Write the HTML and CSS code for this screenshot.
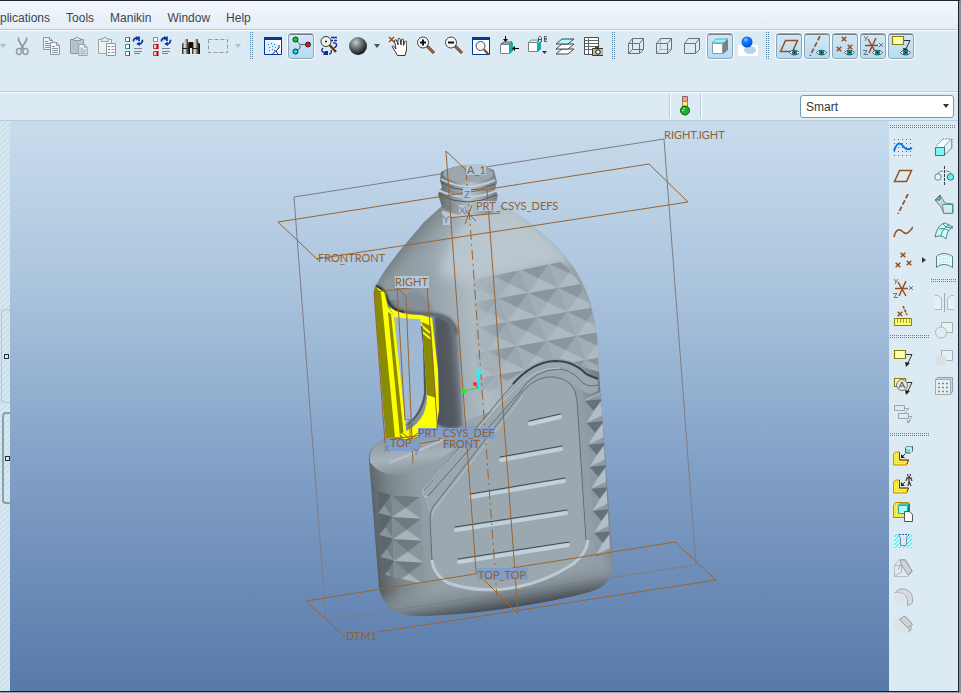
FILE: index.html
```html
<!DOCTYPE html>
<html lang="en">
<head>
<meta charset="utf-8">
<title>Part modeler</title>
<link rel="stylesheet" href="styles.css">
</head>
<body>
<svg class="defs" aria-hidden="true">
  <defs>
    <radialGradient id="gBall" cx=".38" cy=".3" r=".7"><stop offset="0" stop-color="#c4cbd0"/><stop offset=".45" stop-color="#6c767c"/><stop offset="1" stop-color="#14181b"/></radialGradient>
    <radialGradient id="gBlue" cx=".4" cy=".3" r=".7"><stop offset="0" stop-color="#a8dcff"/><stop offset=".3" stop-color="#1a7dff"/><stop offset="1" stop-color="#0050e0"/></radialGradient>
    <linearGradient id="gBino"><stop offset="0" stop-color="#1c1c1a"/><stop offset=".35" stop-color="#f0ead8"/><stop offset=".7" stop-color="#4a463e"/><stop offset="1" stop-color="#000"/></linearGradient>
    <pattern id="pTeal" width="2" height="2" patternUnits="userSpaceOnUse"><rect width="2" height="2" fill="#0b9c9c"/><path d="M0 0h1v1H0zM1 1h1v1H1z" fill="#8a8f90"/></pattern>
    <pattern id="pGold" width="2" height="2" patternUnits="userSpaceOnUse"><rect width="2" height="2" fill="#fff04a"/><path d="M0 0h1v1H0z" fill="#f4c820"/></pattern>
    <pattern id="pHatch" width="4" height="4" patternUnits="userSpaceOnUse"><rect width="4" height="4" fill="#e6ffff"/><path d="M-1 5L5 -1M-1 1L1 -1M3 5L5 3" stroke="#5ae6ee" stroke-width="1.4"/></pattern>
  </defs>
  <symbol id="cut" viewBox="0 0 20 20"><path d="M6.500 1.500V4L11.500 13M14.500 1.500V4L9 13" stroke="#8b9499" stroke-width="1.600" fill="none"/><ellipse cx="7" cy="15.500" rx="2.500" ry="3" stroke="#939ca1" stroke-width="1.500" fill="none"/><ellipse cx="13.500" cy="15.500" rx="2.500" ry="3" stroke="#939ca1" stroke-width="1.500" fill="none"/></symbol>
  <symbol id="sheet" viewBox="0 0 10 13"><path d="M.5 .5h6l3 3v9h-9z" fill="#eef4f7" stroke="#8d979c"/><path d="M6.500 .5v3h3M2 4.500h3M2 6.500h6M2 8.500h6M2 10.500h6" stroke="#8d979c" fill="none"/></symbol>
  <symbol id="copy" viewBox="0 0 20 20"><use href="#sheet" x="3" y="1" width="10" height="13"/><use href="#sheet" x="10" y="6" width="10" height="13"/></symbol>
  <symbol id="paste" viewBox="0 0 20 20"><path d="M2.500 3.500h13v14h-13z" fill="#bcc6cb" stroke="#8d979c"/><path d="M5.500 4.500v-2h2l1-1.500h1l1 1.500h2v2z" fill="#dfe7eb" stroke="#8d979c"/><path d="M4 6l10 10M4 10l6 6M8 6l6 6" stroke="#a5b0b5" fill="none"/><use href="#sheet" x="10" y="8" width="10" height="12"/></symbol>
  <symbol id="pasteSpecial" viewBox="0 0 20 20"><path d="M2.500 3.500h13v14h-13z" fill="#eaf1f5" stroke="#9aa4a9"/><path d="M5.500 5.500v-3h2l1-1.500h1l1 1.500h2v3z" fill="#dfe7eb" stroke="#9aa4a9"/><path d="M10.500 7.500h9v12h-9z" fill="#f4f8fa" stroke="#8d979c"/><path d="M12 10h2v1h-2zM12 13h2v1h-2zM12 16h2v1h-2z" fill="#747e84"/><path d="M15.500 10.500h3M15.500 13.500h3M15.500 16.500h3" stroke="#8d979c"/></symbol>
  <symbol id="spin" viewBox="0 0 12 11"><path d="M1 6C1 3 3 2 5 2M7 .5v5M11 4C11 7 9 9 6.500 9" stroke="#0a37a8" stroke-width="2" fill="none"/><path d="M4 0L8 2.500L4 5zM8 6L4 8.800L8 11z" fill="#0a37a8"/></symbol>
  <symbol id="regen" viewBox="0 0 20 20"><path d="M1.500 1.500h4v4h-4zM1.500 8.500h4v4h-4zM1.500 15.500h4v4h-4z" fill="#fff" stroke="#27999a"/><path d="M5.500 1v5M5.500 8v5M5.500 15v5" stroke="#404c50"/><use href="#spin" x="8" y="0" width="12" height="10"/><path d="M10 12.500h8M10 15.500h8M10 17.500h6" stroke="#7b8489"/></symbol>
  <symbol id="regenRed" viewBox="0 0 20 20"><path d="M1.500 1.500h4v4h-4z" fill="#fff" stroke="#808a8f"/><path d="M1.500 8.500h4v4h-4zM1.500 15.500h4v4h-4z" fill="#ffc4c4" stroke="#c33"/><path d="M5.500 8v5M5.500 15v5" stroke="#c00000" stroke-width="2"/><use href="#spin" x="8" y="0" width="12" height="10"/><path d="M10 12.500h8M10 15.500h8M10 17.500h6" stroke="#7b8489"/></symbol>
  <symbol id="find" viewBox="0 0 20 20"><path d="M4 3h4v3l2 2v10H2V8l2-2z" fill="url(#gBino)"/><path d="M14 3h4v3l2 2v10h-8V8l2-2z" fill="url(#gBino)"/><path d="M9 6h4v6H9z" fill="#111"/><path d="M2 12.500h8M12 12.500h8" stroke="#222"/></symbol>
  <symbol id="pickBox" viewBox="0 0 20 20"><rect x=".5" y="3.500" width="19" height="13" fill="none" stroke="#929ca1" stroke-dasharray="4 2"/></symbol>
  <symbol id="repaint" viewBox="0 0 20 20"><path d="M1.500 1.500h17v17h-17z" fill="#fff" stroke="#003a9e"/><path d="M2 5C8 4 13 6 17 12L9 18H2z" fill="#dff1fb"/><path d="M1 1h18v3H1z" fill="#0038a0"/><path d="M5 8.500h1M8 7.500h1M11 8.500h1M6 11.500h1M9 10.500h1M12 11.500h1M9 13.500h1M6 14.500h1M11 14.500h1" stroke="#1877d8"/><path d="M16 9v3l-7 6.500M13 15l2 3" stroke="#202060" fill="none"/></symbol>
  <symbol id="spinCenter" viewBox="0 0 20 20"><path d="M5 4l4 4.500h8M9 8.500V12l-4 3.500" stroke="#596066" fill="none"/><g stroke="#222"><circle cx="4.500" cy="3.500" r="2.500" fill="#18cf1c"/><circle cx="17" cy="8.500" r="2.500" fill="#f01010"/><circle cx="4.500" cy="15.500" r="2.500" fill="#18d8e0"/></g></symbol>
  <symbol id="orientMode" viewBox="0 0 20 20"><path d="M12 1.500h6M12 4.500h2M15 4.500h3M14 7c4-1 5 3 1 5M4 12c-3 3 0 5 3 4M10 18c2 0 3-2 2-4" stroke="#13279f" fill="none" stroke-width="1.300"/><path d="M4 19l2-4h3v4z" fill="#13279f"/><path d="M10.500 9L17 16" stroke="#6b2f12" stroke-width="2.500"/><circle cx="7" cy="5.500" r="5" fill="#eef6fa" stroke="#333"/><circle cx="7" cy="5.500" r="1" fill="#111"/></symbol>
  <symbol id="ball" viewBox="0 0 20 20"><circle cx="11" cy="10" r="9" fill="url(#gBall)"/></symbol>
  <symbol id="hand" viewBox="0 0 20 20"><path d="M2 1l5 5M7 1L2 6" stroke="#a0491a" stroke-width="1.500"/><path d="M5 10.500c1-1 2 0 4 2.500L7.500 5c0-1.600 2-1.600 2.300 0L11 9V3.500c0-1.600 2-1.600 2.200 0L14 9l.5-5c.2-1.400 2-1.400 2 .2V9.500l1.300-3.700c.5-1.300 2.200-1 2 .5L19.500 14 18 19.500h-7.500L8.500 16z" fill="#fff" stroke="#333"/></symbol>
  <symbol id="lens" viewBox="0 0 20 20"><path d="M12 10l7 7" stroke="#3f3330" stroke-width="3"/><path d="M12.500 10.500l6.500 6.500" stroke="#b86a38" stroke-width="1.500"/><circle cx="8" cy="6.500" r="5.500" fill="#f2f8fb" stroke="#444"/></symbol>
  <symbol id="zoomIn" viewBox="0 0 20 20"><use href="#lens"/><path d="M5 6.500h6M8 3.500v6" stroke="#111" stroke-width="2"/></symbol>
  <symbol id="zoomOut" viewBox="0 0 20 20"><use href="#lens"/><path d="M5 6.500h6" stroke="#111" stroke-width="2"/></symbol>
  <symbol id="refit" viewBox="0 0 20 20"><path d="M1.500 1.500h17v17h-17z" fill="#fff" stroke="#0038a0"/><path d="M1 1h18v3H1z" fill="#0038a0"/><circle cx="9.500" cy="10" r="4.500" fill="#eef6fa" stroke="#444"/><path d="M13 13.500l4.500 5" stroke="#81421d" stroke-width="2"/></symbol>
  <symbol id="reorient" viewBox="0 0 20 20"><path d="M2 8l3-2h8l-3 2z" fill="#a5ffff" stroke="#555"/><path d="M1.500 8.500h9v9h-9z" fill="#fff" stroke="#788286"/><path d="M11 8l3-2v9l-3 3z" fill="url(#pTeal)"/><path d="M6.500 0v5M20 12.500h-5" stroke="#000"/><path d="M4 3h5L6.500 6zM16 10v5l-3-2.500z" fill="#000"/></symbol>
  <symbol id="views" viewBox="0 0 20 20"><path d="M1 7l3-3h8l-2 3z" fill="#a5ffff" stroke="#555" stroke-width=".6"/><path d="M1.500 6.500h9v9h-9z" fill="#fff" stroke="#788286"/><path d="M11 7l3-2v8l-3 3z" fill="url(#pTeal)"/><path d="M11.500 6V1.500l1-1h1l1 1V6M11.500 3.500h3M17.500 .5h2l1 1-1 1.500h-2zM17.500 3h2l1 1-1 1.500h-2z" stroke="#555" fill="none"/><path d="M15 15h5l-2.500 3z" fill="#333"/></symbol>
  <symbol id="layers" viewBox="0 0 20 20"><g stroke="#444"><path d="M1 18l6-5h12l-6 5z" fill="#fff"/><path d="M1 13l6-5h12l-6 5z" fill="#fff"/><path d="M1 8l6-5h12l-6 5z" fill="#a8ffff"/></g></symbol>
  <symbol id="viewMgr" viewBox="0 0 20 20"><path d="M1.500 1.500h14v17h-14z" fill="#fff" stroke="#454d51"/><path d="M1.500 4.500h14M1.500 7.500h14M1.500 10.500h14M1.500 13.500h14M5.500 1v17" stroke="#5e676b"/><path d="M9.500 12.500h11v7h-11z" fill="#bab5a4" stroke="#383830"/><path d="M12 10h4v2h-4z" fill="#484840"/><circle cx="15" cy="16" r="2.200" fill="#fff" stroke="#111"/></symbol>
  <symbol id="wire" viewBox="0 0 20 20"><g stroke="#697176" fill="none"><path d="M2.500 7.500h11v10h-11zM6.500 2.500h11v11h-11zM2.500 7.500l4-5M13.500 7.500l4-5M2.500 17.500l4-4M13.500 17.500l4-4"/></g></symbol>
  <symbol id="hidden" viewBox="0 0 20 20"><g stroke="#697176" fill="none"><path d="M6.500 2.500v11h11M2.500 17.500l4-4" stroke="#a9b4b9"/><path d="M2.500 7.500h11v10h-11zM2.500 7.500l4-5h11v11l-4 4M13.500 7.500l4-5"/></g></symbol>
  <symbol id="noHidden" viewBox="0 0 20 20"><path d="M2.500 7.500h11v10h-11zM2.500 7.500l4-5h11v11l-4 4M13.500 7.500l4-5" stroke="#697176" fill="none"/></symbol>
  <symbol id="shaded" viewBox="0 0 20 20"><path d="M2 7l4-4h12l-4 4z" fill="#7effff" stroke="#6f7f85" stroke-width=".7"/><path d="M2.500 7.500h10v10h-10z" fill="#fff" stroke="#8d9da3"/><path d="M13 7l5-4v11l-5 4z" fill="url(#pTeal)"/></symbol>
  <symbol id="enhanced" viewBox="0 0 20 20"><path d="M0 9h20v11H0z" fill="#fff"/><ellipse cx="12" cy="14" rx="6" ry="4" fill="#b5d4ec"/><circle cx="9" cy="6" r="5.500" fill="url(#gBlue)"/></symbol>
  <symbol id="eye" viewBox="0 0 11 7"><path d="M.5 3.500C3 .5 7.500 .5 10.500 3.500C8 6.700 3 6.700 .5 3.500z" fill="#fff" stroke="#444"/><circle cx="5.500" cy="3.500" r="2.500" fill="#087c7c"/><path d="M5 3h1v1H5z"/></symbol>
  <symbol id="plane" viewBox="0 0 20 20"><path d="M1.500 15.500l5-11h12l-5 11z" fill="none" stroke="#94501f" stroke-width="1.500"/></symbol>
  <symbol id="axis" viewBox="0 0 20 20"><path d="M15 0L5 20" stroke="#94501f" stroke-width="1.700" stroke-dasharray="5 2"/></symbol>
  <symbol id="x" viewBox="0 0 6 6"><path d="M.7 .7l4.600 4.600M5.300 .7L.7 5.300" stroke="#94501f" stroke-width="1.500"/></symbol>
  <symbol id="points" viewBox="0 0 20 20"><use href="#x" x="7" y="2" width="6" height="6"/><use href="#x" x="2" y="12" width="6" height="6"/><use href="#x" x="13" y="10" width="6" height="6"/></symbol>
  <symbol id="csys" viewBox="0 0 20 20"><path d="M2 10.500h13M5 4l8 14M13 3L6 18" stroke="#94501f" stroke-width="1.500"/><path d="M1 1l2 3 2-3M3 4l-1 2M16 8l4 4M20 8l-4 4M0 15.500h4L1 19.500h4" stroke="#6d767b" fill="none"/></symbol>
  <symbol id="note" viewBox="0 0 20 20"><path d="M1.500 2.500h11v8h-11z" fill="#ffffa8" stroke="#84810a" stroke-width="1.200"/><path d="M13 6.500h6L14 17" stroke="#333" fill="none"/><path d="M12 14l1 5 4-4z" fill="#222"/></symbol>
  <symbol id="planeEye" viewBox="0 0 20 20"><use href="#plane"/><use href="#eye" x="10" y="13" width="11" height="7"/></symbol>
  <symbol id="axisEye" viewBox="0 0 20 20"><use href="#axis" x="-2"/><use href="#eye" x="9" y="13" width="11" height="7"/></symbol>
  <symbol id="pointsEye" viewBox="0 0 20 20"><use href="#points" x="-1" y="-2"/><use href="#eye" x="9" y="13" width="11" height="7"/></symbol>
  <symbol id="csysEye" viewBox="0 0 20 20"><use href="#csys" y="-1"/><use href="#eye" x="9" y="13" width="11" height="7"/></symbol>
  <symbol id="noteEye" viewBox="0 0 20 20"><use href="#note" y="-2"/><use href="#eye" x="9" y="13" width="11" height="7"/></symbol>
  <symbol id="sketch" viewBox="0 0 20 20"><g fill="none" stroke="#3f6f9c" stroke-dasharray="1 3"><path d="M1 1.500h19M1 5.500h19M1 9.500h19M1 13.500h19M1 17.500h19"/></g><path d="M1 13C4 4 7 4 10 8S15 12 19 10" stroke="#0878ea" stroke-width="2" fill="none"/></symbol>
  <symbol id="curve" viewBox="0 0 20 20"><path d="M1 15C3 6 7 7 10 10S16 11 20 5" stroke="#94501f" stroke-width="1.500" fill="none"/></symbol>
  <symbol id="measure" viewBox="0 0 20 20"><use href="#x" x="4" y="5" width="6" height="6"/><path d="M10 0l4 9" stroke="#94501f" stroke-width="1.600" stroke-dasharray="3 1"/><path d="M1.500 12.500h17v7h-17z" fill="#ffff7d" stroke="#84810a"/><path d="M4.500 13v4M7.500 13v4M10.500 13v4M13.500 13v4M16.500 13v4" stroke="#a5a020"/></symbol>
  <symbol id="noteA" viewBox="0 0 20 20"><use href="#note"/><circle cx="9" cy="9" r="5.500" fill="#e4e4da" stroke="#777"/><path d="M6 12l3-6 3 6M7 10h4" stroke="#555" fill="none"/></symbol>
  <symbol id="noteOff" viewBox="0 0 20 20"><path d="M1.500 1.500h10v5h-10zM5.500 9.500h10v5h-10z" stroke="#9ba5aa" fill="#e2e9ed"/><path d="M12 4.500h4L12 9M16 12.500h3L14.500 19v-3M14.500 19l3-2" stroke="#9ba5aa" fill="none"/></symbol>
  <symbol id="gold" viewBox="0 0 20 20"><path d="M.5 8l2-2h4v8h9l-2 5H.5z" fill="url(#pGold)" stroke="#d09000"/><path d="M6.500 6v8h9l-1.500 4" stroke="#6e430b" fill="none"/></symbol>
  <symbol id="addPart" viewBox="0 0 20 20"><use href="#gold"/><path d="M12.500 2l2-2h5v5l-2 2h-5z" fill="#70dede" stroke="#566"/><path d="M13 2h5v5" stroke="#fff" fill="none"/><path d="M12 8l-3 3" stroke="#333"/><path d="M8 8v4h4z" fill="#222"/></symbol>
  <symbol id="addManikin" viewBox="0 0 20 20"><use href="#gold"/><path d="M12 8l-3 3" stroke="#333"/><path d="M8 8v4h4z" fill="#222"/><circle cx="16" cy="1" r="1.500" fill="#fff" stroke="#333"/><path d="M16 3v4M13 7l1-3h4l1 3M15 12l1-5 2 5" stroke="#444" stroke-width="1.300" fill="none"/></symbol>
  <symbol id="include" viewBox="0 0 20 20"><path d="M.5 3.500l2-3h13v12l-3 3H.5z" fill="url(#pGold)" stroke="#c08800"/><path d="M5.500 3.500h9v8h-9z" fill="#9fffff" stroke="#2ca8ac"/><path d="M5 3l2-2h10l-2 2z" fill="#42c7c7"/><path d="M15 3l2-2v10l-2 1z" fill="#078888"/><path d="M11.500 9.500h5l3 3v7h-8z" fill="#fff" stroke="#555"/></symbol>
  <symbol id="hole" viewBox="0 0 20 20"><path d="M1 4h4l3 3v9h5V7l3-3h3v14H1z" fill="url(#pHatch)"/><path d="M5 4.500l2.500 3v8h6v-8l3-3" stroke="#77909b" fill="none"/><path d="M6 4.500h10" stroke="#345ac4" stroke-dasharray="2 1"/></symbol>
  <symbol id="shell" viewBox="0 0 20 20"><path d="M1.500 7.500l5-6h6l7 12-5 5h-13z" stroke="#b5bfc4" fill="#e2e9ed"/><path d="M7 2h5l7 11-4 4L8 6z" fill="#ccd4d8" stroke="#949ea3"/><path d="M1.500 7.500h7v6l-7 5M8 6L5 12" stroke="#a9b3b8" fill="none"/></symbol>
  <symbol id="round" viewBox="0 0 20 20"><path d="M1.500 7l5-4h5c5 1 8 5 8 10v4l-5 3v-4c0-5-3-9-8-9z" fill="#d4dadd" stroke="#a0aaaf"/><path d="M1 7h5c5 0 8 4 8 9v3l-6-1-7-3z" fill="#dee3e5"/></symbol>
  <symbol id="chamfer" viewBox="0 0 20 20"><path d="M1 7l5-4 8 9v7l-6-1-7-4z" fill="#dee3e5"/><path d="M6.500 5.500l4-3h2l7 8-5 3z" fill="#cdd4d7" stroke="#8f999e"/><path d="M15 14l4-3v5l-4 3z" fill="#b9c2c7"/></symbol>
  <symbol id="extrude" viewBox="0 0 20 20"><path d="M2 8l7-7h9v9l-7 7" fill="#eefdff" stroke="#72868d" stroke-dasharray="2 1"/><path d="M17.500 1v9l-7 7V8z" fill="#d8f6f8" stroke="#8aa0a5"/><path d="M1.500 9.500h9v8h-9z" fill="#80f4f4" stroke="#4b7378"/></symbol>
  <symbol id="revolve" viewBox="0 0 20 20"><path d="M10.500 0v20" stroke="#343e43" stroke-dasharray="3 1"/><circle cx="4" cy="11" r="3.200" fill="#e5f5f7" stroke="#6d858b"/><circle cx="16.500" cy="11" r="3.200" fill="#6befef" stroke="#477177"/><path d="M4 8c0-2 3-3 5-3M12 5c3 0 5 1 5 3" stroke="#6d858b" fill="none"/></symbol>
  <symbol id="sweep" viewBox="0 0 20 20"><path d="M1 6l5-5 5 8 8 1v9h-9L7 13z" fill="#d0d3d5" stroke="#748086"/><path d="M1 6l5-5v5z" fill="#33dada" stroke="#427177"/><path d="M9 10l10 1v8z" fill="#8df3f3"/><path d="M8.500 10.500h10v9h-9z" fill="#e8fbfc" fill-opacity=".5" stroke="#5c9297"/></symbol>
  <symbol id="blend" viewBox="0 0 20 20"><path d="M1 15C3 6 6 2 11 1l8 4c-4 2-6 5-7 12-3-3-7-4-11-2z" fill="#cffafa" stroke="#4e8084"/><path d="M5 7c4-1 8 0 10 2M9 2l3 3 7 1M7 14c1-5 3-8 8-11" stroke="#368e93" fill="none"/></symbol>
  <symbol id="style" viewBox="0 0 20 20"><path d="M2.500 17.500v-11c4-4 11-4 16 0v11c-5-4-12-4-16 0z" fill="#e2fbfb" stroke="#587d82"/><path d="M5 7c4-2 8-2 11 0M5 10c4-2 8-2 11 0M5 13c4-2 8-2 11 0" stroke="#91d4d8" stroke-dasharray="1 1" fill="none"/></symbol>
  <symbol id="mirror" viewBox="0 0 20 20"><path d="M1 17.500h6.500v-11L4 3.500H1M20 17.500h-6.500v-11L17 3.500h3" fill="#e9f0f4" stroke="#aeb9be"/><path d="M10.500 1v19" stroke="#9ea9ae"/></symbol>
  <symbol id="merge" viewBox="0 0 20 20"><path d="M7.500 2.500h11v10h-11z" fill="#eaf1f5" stroke="#a6b1b6"/><circle cx="7" cy="12.500" r="5.500" fill="#e3ebef" stroke="#acb6bb"/></symbol>
  <symbol id="trim" viewBox="0 0 20 20"><path d="M7.500 2.500h11v10h-11z" fill="#eaf1f5" stroke="#a6b1b6"/><circle cx="7" cy="12.500" r="5.500" fill="#d9dfe2"/></symbol>
  <symbol id="patternTool" viewBox="0 0 20 20"><path d="M1.500 3.500l2-2h15v14l-2 3h-15z" fill="#cdd5d9" stroke="#949ea3"/><path d="M1.500 3.500h15v15h-15z" fill="#e8eef1" stroke="#a0aaaf"/><path d="M4 7.500h11M4 11.500h11M4 15.500h11" stroke="#7d878c" stroke-dasharray="2 2" stroke-width="1.500"/></symbol>
</svg>

<div class="window">
  <nav class="menu" aria-label="Main menu">
    <a href="#">plications</a><a href="#">Tools</a><a href="#">Manikin</a><a href="#">Window</a><a href="#">Help</a>
  </nav>
  <div class="toolbar">
    <button class="drop edge" aria-label="Undo list"></button>
    <button class="tool" aria-label="Cut"><svg><use href="#cut"/></svg></button>
    <button class="tool" aria-label="Copy"><svg><use href="#copy"/></svg></button>
    <button class="tool" aria-label="Paste"><svg><use href="#paste"/></svg></button>
    <button class="tool" aria-label="Paste special"><svg><use href="#pasteSpecial"/></svg></button>
    <button class="tool" aria-label="Regenerate"><svg><use href="#regen"/></svg></button>
    <button class="tool" aria-label="Regenerate manager"><svg><use href="#regenRed"/></svg></button>
    <button class="tool" aria-label="Find"><svg><use href="#find"/></svg></button>
    <button class="tool" aria-label="Select inside box"><svg><use href="#pickBox"/></svg></button>
    <button class="drop" aria-label="Selection modes"></button>
    <span class="grip"></span>
    <button class="tool" aria-label="Repaint"><svg><use href="#repaint"/></svg></button>
    <button class="tool on" aria-label="Spin center"><svg><use href="#spinCenter"/></svg></button>
    <button class="tool" aria-label="Orient mode"><svg><use href="#orientMode"/></svg></button>
    <button class="tool" aria-label="Appearance"><svg><use href="#ball"/></svg></button>
    <button class="drop dark" aria-label="Appearance list"></button>
    <button class="tool" aria-label="Pan"><svg><use href="#hand"/></svg></button>
    <button class="tool" aria-label="Zoom in"><svg><use href="#zoomIn"/></svg></button>
    <button class="tool" aria-label="Zoom out"><svg><use href="#zoomOut"/></svg></button>
    <button class="tool" aria-label="Refit"><svg><use href="#refit"/></svg></button>
    <button class="tool" aria-label="Reorient"><svg><use href="#reorient"/></svg></button>
    <button class="tool" aria-label="Saved views"><svg><use href="#views"/></svg></button>
    <button class="tool" aria-label="Layers"><svg><use href="#layers"/></svg></button>
    <button class="tool" aria-label="View manager"><svg><use href="#viewMgr"/></svg></button>
    <span class="grip mid"></span>
    <button class="tool" aria-label="Wireframe"><svg><use href="#wire"/></svg></button>
    <button class="tool" aria-label="Hidden line"><svg><use href="#hidden"/></svg></button>
    <button class="tool" aria-label="No hidden"><svg><use href="#noHidden"/></svg></button>
    <button class="tool on" aria-label="Shading"><svg><use href="#shaded"/></svg></button>
    <button class="tool" aria-label="Enhanced realism"><svg><use href="#enhanced"/></svg></button>
    <span class="grip last"></span>
    <button class="tool on" aria-label="Show planes"><svg><use href="#planeEye"/></svg></button>
    <button class="tool on" aria-label="Show axes"><svg><use href="#axisEye"/></svg></button>
    <button class="tool on" aria-label="Show points"><svg><use href="#pointsEye"/></svg></button>
    <button class="tool on" aria-label="Show coordinate systems"><svg><use href="#csysEye"/></svg></button>
    <button class="tool on" aria-label="Show annotations"><svg><use href="#noteEye"/></svg></button>
  </div>
  <div class="status">
    <div class="light" role="img" aria-label="Regeneration status">
      <svg viewBox="0 0 12 20"><path d="M3.500 .5h5v5h-5z" fill="#f29a9a" stroke="#8c6464"/><path d="M3.500 5.500h5v5h-5z" fill="#fff36a" stroke="#8f8a50"/><circle cx="6" cy="14.500" r="4.500" fill="#1bb52a" stroke="#0e5316"/><path d="M4 12.500h2M3 14.500h2" stroke="#a0f5a2"/></svg>
    </div>
    <div class="filter"><select aria-label="Selection filter"><option>Smart</option></select></div>
  </div>

  <div class="work">
    <div class="rail"><button class="sash" aria-label="Expand tree"></button><button class="sash strong" aria-label="Expand browser"></button></div>
    <main class="canvas">
      <svg viewBox="10 121 879 570" preserveAspectRatio="xMidYMid meet" role="img" aria-label="Bottle model">
        <defs>
          <linearGradient id="body" gradientUnits="userSpaceOnUse" x1="372" y1="300" x2="610" y2="270"><stop offset="0" stop-color="#626c73"/><stop offset=".14" stop-color="#87929a"/><stop offset=".3" stop-color="#9daab2"/><stop offset=".42" stop-color="#b0bcc4"/><stop offset=".55" stop-color="#a3afb7"/><stop offset=".9" stop-color="#95a1a9"/><stop offset="1" stop-color="#7b8790"/></linearGradient>
          <linearGradient id="shoulder" gradientUnits="userSpaceOnUse" x1="400" y1="228" x2="440" y2="262"><stop offset="0" stop-color="#5b656c"/><stop offset=".5" stop-color="#8d989f"/><stop offset="1" stop-color="#a4b0b8" stop-opacity="0"/></linearGradient>
          <linearGradient id="lower" gradientUnits="userSpaceOnUse" x1="369" y1="530" x2="613" y2="500"><stop offset="0" stop-color="#4f585d"/><stop offset=".1" stop-color="#7a858b"/><stop offset=".22" stop-color="#919ca4"/><stop offset=".5" stop-color="#9aa6ae"/><stop offset=".92" stop-color="#929ea6"/><stop offset="1" stop-color="#727e86"/></linearGradient>
          <linearGradient id="foot" gradientUnits="userSpaceOnUse" x1="490" y1="575" x2="496" y2="612"><stop offset="0" stop-color="#98a4ac" stop-opacity="0"/><stop offset=".55" stop-color="#7e8990"/><stop offset="1" stop-color="#3e464c"/></linearGradient>
          <linearGradient id="neck" gradientUnits="userSpaceOnUse" x1="438" y1="0" x2="498" y2="0"><stop offset="0" stop-color="#5b656b"/><stop offset=".3" stop-color="#8f9aa1"/><stop offset=".55" stop-color="#b4c0c8"/><stop offset=".8" stop-color="#8d989f"/><stop offset="1" stop-color="#737e85"/></linearGradient>
          <linearGradient id="recess" gradientUnits="userSpaceOnUse" x1="432" y1="360" x2="466" y2="357"><stop offset="0" stop-color="#4c525a"/><stop offset=".55" stop-color="#555b63"/><stop offset="1" stop-color="#9aa6ae"/></linearGradient>
          <linearGradient id="ledge" gradientUnits="userSpaceOnUse" x1="400" y1="436" x2="406" y2="485"><stop offset="0" stop-color="#8c979e"/><stop offset=".45" stop-color="#a7b3bb"/><stop offset=".7" stop-color="#8f9aa1"/><stop offset="1" stop-color="#899399" stop-opacity="0"/></linearGradient>
          <linearGradient id="fade" gradientUnits="userSpaceOnUse" x1="476" y1="0" x2="515" y2="0"><stop offset="0" stop-color="#fff" stop-opacity=".25"/><stop offset="1" stop-color="#fff"/></linearGradient>
          <mask id="facetFade" maskUnits="userSpaceOnUse" x="460" y="250" width="150" height="160"><path fill="url(#fade)" d="M460 250h150v160H460z"/></mask>
          <filter id="soft" x="-20%" y="-20%" width="140%" height="140%"><feGaussianBlur stdDeviation="6"/></filter>
          <filter id="softEdge" x="-20%" y="-20%" width="140%" height="140%"><feGaussianBlur stdDeviation="1.500"/></filter>
          <clipPath id="topClip"><path d="M443 205L424 222C402 248 386 266 377 284L380 310H599C598 300 590 292 574 268C557 242 528 222 513 211L496 203z"/></clipPath>
          <pattern id="facet" width="30" height="24" patternUnits="userSpaceOnUse" patternTransform="matrix(1 -.17 .38 1 528 293)"><rect width="30" height="24" fill="#a8b4bc"/><path d="M0 0H30L15 12z" fill="#8a969e"/><path d="M30 0V24L15 12z" fill="#9ba7af"/><path d="M0 24H30L15 12z" fill="#aebac2"/><path d="M0 0L15 12 0 24z" fill="#a2aeb6"/></pattern>
          <pattern id="facetLeft" width="29" height="22" patternUnits="userSpaceOnUse" patternTransform="matrix(1 .06 .05 1 391 495)"><path d="M0 0H29V22H0z" fill="#818c93"/><path d="M0 0H29L14 12z" fill="#6f7a81"/><path d="M29 0V22L14 12z" fill="#8a959c"/><path d="M0 22H29L14 12z" fill="#a8b4bb"/></pattern>
          <pattern id="facetThin" width="14" height="22" patternUnits="userSpaceOnUse" patternTransform="matrix(1 .25 .05 1 377 491)"><path d="M0 0H14V22H0z" fill="#5c666c"/><path d="M0 22H14L7 12z" fill="#8a959c"/><path d="M14 0V22L7 12z" fill="#737e85"/></pattern>
          <pattern id="facetRight" width="26" height="22" patternUnits="userSpaceOnUse" patternTransform="matrix(1 -.1 .07 1 583 401)"><path d="M0 0H26V22H0z" fill="#8e9aa2"/><path d="M2 0L20 0 10 11z" fill="#65717a"/><path d="M2 22L10 11 18 2V16z" fill="#b2bfc8"/></pattern>
        </defs>

        <path class="frame" d="M664 139L294 197L326 620"/>

        <path fill="url(#body)" fill-rule="evenodd" d="M443 205L424 222C402 248 386 266 377 284L374 290L386 438L420 520H606L599 370C598 320 590 292 574 268C557 242 528 222 513 211L496 203zM394 315L421 318L425 392C424 412 412 421 404 430z"/>
        <g clip-path="url(#topClip)">
          <path fill="#b9c6ce" filter="url(#soft)" d="M468 208L515 206C545 232 560 246 574 262L470 282L440 276C444 250 455 232 468 218z"/>
          <path fill="url(#shoulder)" d="M443 205L424 222C402 248 386 266 377 284L380 300L446 300L480 205z"/>
        </g>
        <path fill="url(#facet)" mask="url(#facetFade)" d="M473 280L560 262C580 275 597 310 598 350V375Q583 368 576 363Q545 350 520 373L478 398z"/>
        <path fill="url(#lower)" d="M386 438C374 444 369 449 369 460L379 588C382 604 396 616 418 616C470 616 550 603 590 592C606 587 613 577 613 562L599 372L555 358L515 385L495 410L440 430z"/>
        <path fill="url(#foot)" d="M377 560C410 592 550 594 612 545V568C612 579 606 587 590 592C550 603 470 616 418 616C396 616 382 604 379 588z"/>
        <path fill="url(#ledge)" d="M386 438C374 444 369 449 370 462C385 485 426 474 456 447L495 425L440 428z"/>
        <path fill="none" stroke="#b5c1c9" stroke-width="2" d="M389 463Q414 453 447 438"/>
        <path fill="url(#recess)" filter="url(#softEdge)" d="M434 316Q452 318 458 335L463 426Q448 433 434 422Q440 405 436 370z"/>
        <path fill="#858f97" filter="url(#softEdge)" d="M398 303C405 289 421 288 430 302L434 315L397 309z"/>
        <path fill="none" stroke="#4b555c" stroke-width="3" filter="url(#softEdge)" d="M376 286Q385 289 388 301Q394 312 410 313L438 315Q454 318 457 334"/>
        <path fill="none" stroke="#333c42" stroke-width="2" d="M376 286Q385 289 388 301Q393 311 404 312"/>

        <path fill="url(#facetLeft)" d="M391 495L420 497L424 584L393 577z"/>
        <path fill="url(#facetThin)" d="M377 491L391 495L394 577L382 574z"/>
        <path fill="url(#facetRight)" d="M584 400L601 392L610 550L596 557z"/>

        <path fill="#9ba7af" d="M423 492L517 384Q531 361 557 360Q578 362 588 377L598 379V391L590 394Q578 390 571 382L577 400L430 518z"/>
        <path class="groove faint" d="M424 490L502 397L515 382"/>
        <path class="groove" d="M513 384Q532 362 555 361Q574 361 586 374L598 379"/>
        <path class="groove faint" d="M428 496L519 393Q534 369 560 369Q570 370 578 378Q586 389 598 385"/>
        <path class="shine" d="M427 497Q421 496 423 490L497 407L515 389Q535 367 560 368"/>
        <path fill="#9ca8b0" d="M430 516Q430 509 436 503L523 391Q538 375 554 377Q575 379 577 400L587 540Q586 554 573 563Q545 582 517 587Q480 594 448 583Q432 574 432 558z"/>
        <path class="groove faint" d="M432 561L430 519Q430 509 436 503L523 391Q538 375 554 377Q575 379 577 400L586 540"/>
        <path class="shine wide" d="M588 540Q587 553 573 564Q545 582 517 587Q480 594 448 583Q433 574 432 560"/>
        <path class="shine" d="M432 516Q432 511 438 505L523 396"/>
        <g class="slotLight"><path d="M530 424L560 417M501 460L561 449M471 497L564 481M456 530L566 513M459 562L568 545"/></g>
        <g class="slotDark"><path d="M529 421L560 414M500 457L562 446M470 494L565 478M455 527L567 510M458 559L569 542"/></g>

        <path fill="url(#neck)" d="M441 172Q467 158 494 170L497 182L495 190L498 195L494 212Q465 222 442 207L438 194L442 187L440 181z"/>
        <ellipse cx="468" cy="174" rx="25" ry="8" fill="#9ba6ad"/>
        <path fill="none" stroke="#c1ccd3" stroke-width="2" d="M441 179Q466 193 495 180M438 190Q467 204 498 190"/>
        <path fill="none" stroke="#4e585e" d="M442 183Q467 197 495 184M440 195Q467 209 496 195"/>
        <path fill="none" stroke="#b9c6ce" stroke-width="3" d="M442 212Q467 222 497 213"/>

        <path fill="#8a8c00" d="M374 291L376 287L386 293L402 437H386z"/>
        <path fill="#fbff00" d="M376 287L384 292L388 307L394 315L397 345L407 437H395L381 293z"/>
        <path fill="#8a8c00" d="M388 312L391 314L404 437H400z"/>
        <path fill="#fbff00" d="M389 307Q400 315 421 315L432 318L438 370L439 410L436 429L407 442L400 434Q427 423 427 397L421 321L395 317z"/>
        <path fill="#8a8c00" d="M422 322L431 326L436 398L427 395z"/>
        <path fill="none" stroke="#fbff00" stroke-width="2" d="M421 325l9 8M421 331l10 8M427 400l10 7M426 406l10 7"/>
        <path fill="none" stroke="#515960" stroke-width="3" d="M421 326L425 390Q424 411 407 424"/>
        <path fill="#9fb9d4" d="M395 318L420 319L423 345L424 393Q421 413 406 425z"/>

        <path class="frame" d="M664 139L696 565M326 620L696 565"/>
        <g class="datum">
          <path d="M278 222L649 164L688 202L316 259M278 222L318 260"/>
          <path d="M306 601L675 542L716 580L378 632M306 601L345 637"/>
          <path d="M446 151L476 572L518 614L487 190M446 151L466 170"/>
          <path d="M374 292L427 286L438 434L385 443zM397 287L406 297L413 463M397 287L405 420M385 440L460 430M394 448L440 440"/>
          <path d="M460 205L476 221M447 218L500 213M465 224L472 205"/>
          <path d="M466 170L471 236L497 598" stroke-dasharray="10 4 2 4"/>
          <path d="M402 433L421 447M402 446L419 432M410 426v24"/>
        </g>
        <path d="M478.500 390V372" stroke="#2ee6ee"/><path d="M478 388L463 391" stroke="#22e822"/><path d="M478 388L475 384" stroke="#e22"/>
        <circle cx="479" cy="372" r="3" fill="#2ef0f4"/><circle cx="464" cy="391" r="2.500" fill="#25ee25"/><circle cx="475" cy="384" r="2" fill="#f02c35"/>

        <g fill="#b0c7de"><path d="M466 164h20v11h-20zM463 188h8v12h-8zM459 205h6v10h-6zM443 214h7v11h-7zM476 201h24v10h-24zM395 276h34v12h-34z"/></g>
        <g fill="#7f9ec9"><path d="M418 428h77v11h-77zM443 439h35v9h-35zM386 439h33v12h-33zM477 568h51v12h-51z"/></g>
        <g class="tag">
          <text x="664" y="139">RIGHT.IGHT</text>
          <text x="467" y="174">A_1</text>
          <text x="476" y="210">PRT_CSYS_DEFS</text>
          <text x="318" y="262">FRONTRONT</text><text x="340" y="263" class="rule">_</text>
          <text x="395" y="286">RIGHT</text>
          <text x="418" y="437">PRT_CSYS_DEF</text>
          <text x="443" y="448">FRONT</text>
          <text x="390" y="447">TOP</text>
          <text x="478" y="579">TOP_TOP</text>
          <text x="346" y="640">DTM1</text>
          <g class="axisName"><text x="464" y="198">Z</text><text x="459" y="214">X</text><text x="443" y="223">Y</text><text x="405" y="426">Z</text><text x="413" y="455">Y</text><text x="383" y="452">X</text></g>
        </g>
      </svg>
    </main>
    <aside class="palette" aria-label="Feature tools">
      <div class="column">
        <button class="tool" aria-label="Sketch"><svg><use href="#sketch"/></svg></button>
        <button class="tool" aria-label="Plane"><svg><use href="#plane"/></svg></button>
        <button class="tool" aria-label="Axis"><svg><use href="#axis"/></svg></button>
        <button class="tool" aria-label="Curve"><svg><use href="#curve"/></svg></button>
        <div class="pair"><button class="tool" aria-label="Point"><svg><use href="#points"/></svg></button><button class="more" aria-label="More point tools"></button></div>
        <button class="tool" aria-label="Coordinate system"><svg><use href="#csys"/></svg></button>
        <button class="tool" aria-label="Analysis"><svg><use href="#measure"/></svg></button>
        <hr>
        <button class="tool" aria-label="Annotation"><svg><use href="#note"/></svg></button>
        <button class="tool" aria-label="Annotation feature"><svg><use href="#noteA"/></svg></button>
        <button class="tool" aria-label="Propagate annotation"><svg><use href="#noteOff"/></svg></button>
        <hr>
        <button class="tool" aria-label="Assemble"><svg><use href="#addPart"/></svg></button>
        <button class="tool" aria-label="Insert manikin"><svg><use href="#addManikin"/></svg></button>
        <button class="tool" aria-label="Create component"><svg><use href="#include"/></svg></button>
        <button class="tool" aria-label="Hole"><svg><use href="#hole"/></svg></button>
        <button class="tool" aria-label="Rib"><svg><use href="#shell"/></svg></button>
        <button class="tool" aria-label="Round"><svg><use href="#round"/></svg></button>
        <button class="tool" aria-label="Chamfer"><svg><use href="#chamfer"/></svg></button>
      </div>
      <div class="column second">
        <button class="tool" aria-label="Extrude"><svg><use href="#extrude"/></svg></button>
        <button class="tool" aria-label="Revolve"><svg><use href="#revolve"/></svg></button>
        <button class="tool" aria-label="Sweep"><svg><use href="#sweep"/></svg></button>
        <button class="tool" aria-label="Boundary blend"><svg><use href="#blend"/></svg></button>
        <button class="tool" aria-label="Style"><svg><use href="#style"/></svg></button>
        <hr>
        <button class="tool" aria-label="Mirror"><svg><use href="#mirror"/></svg></button>
        <button class="tool" aria-label="Merge"><svg><use href="#merge"/></svg></button>
        <button class="tool" aria-label="Trim"><svg><use href="#trim"/></svg></button>
        <button class="tool" aria-label="Pattern"><svg><use href="#patternTool"/></svg></button>
      </div>
    </aside>
  </div>
</div>
</body>
</html>
```
FILE: styles.css
```css
* { box-sizing: border-box; }

body {
  margin: 0;
  background: #8b919b;
  color: #3c4650;
  font: 12px/16px "Liberation Sans", Arial, sans-serif;
}

.defs { position: absolute; width: 0; height: 0; }

.window {
  display: flex;
  flex-direction: column;
  height: 100vh;
  overflow: hidden;
  background: #dceaf3;
  border-top: 1px solid #23252e;
  border-right: 2px solid #8b919b;
  border-bottom: 1px solid #9aa0a8;
  box-shadow: inset -1px -1px #1a2030;
  padding: 0 1px 1px 0;
}

.menu {
  display: flex;
  flex: none;
  gap: 16px;
  height: 28px;
  padding-top: 9px;
  background: linear-gradient(#f2f8fc, #e4edf6);
}

.menu a { color: inherit; text-decoration: none; }

.toolbar {
  display: flex;
  flex: none;
  height: 62px;
  padding-top: 2px;
  border-top: 1px solid #b5cddd;
  box-shadow: inset 0 1px #fafdff;
}

button { margin: 0; padding: 0; border: 0; background: none; font: inherit; }

.tool {
  display: flex;
  flex: none;
  align-items: center;
  justify-content: center;
  width: 28px;
  height: 28px;
  border: 1px solid transparent;
  border-radius: 4px;
}

.tool svg { flex: none; width: 20px; height: 20px; overflow: visible; }

.tool.on {
  border-color: #fafdff;
  background: linear-gradient(#d5e7f4, #b4dcf6);
  box-shadow: inset 0 0 0 1px #8ba6b7, inset 0 2px #71838f;
}

.drop {
  display: flex;
  flex: none;
  align-items: center;
  justify-content: center;
  width: 12px;
  height: 28px;
}

.drop::after {
  content: "";
  border: 3px solid transparent;
  border-top: 4px solid #b1bdc5;
  border-bottom: 0;
}

.drop.dark::after { border-top-color: #46525a; }
.drop.edge { width: 8px; justify-content: flex-start; }

.grip {
  flex: none;
  width: 4px;
  height: 28px;
  margin: 0 6px 0 5px;
  background: repeating-conic-gradient(#5686a5 0 25%, transparent 0 100%) 0 0 / 2px 2px;
}

.grip.mid { margin: 0 7px 0 4px; }
.grip.last { margin: 0 6px 0 3px; }

.status {
  display: flex;
  flex: none;
  justify-content: flex-end;
  height: 30px;
  border-top: 1px solid #b5cddd;
  border-bottom: 1px solid #b5cddd;
  box-shadow: inset 0 1px #fafdff;
}

.light {
  display: flex;
  align-items: center;
  justify-content: center;
  width: 32px;
  margin: 2px 99px 2px 0;
  border-left: 1px solid #bccbd6;
  border-right: 1px solid #bccbd6;
  box-shadow: inset 1px 0 #fafdff, 1px 0 #fafdff;
}

.light svg { width: 12px; height: 20px; }

.filter { position: relative; width: 154px; margin: 3px 4px 2px 0; }

.filter select {
  width: 100%;
  height: 23px;
  padding: 0 5px;
  appearance: none;
  border: 1px solid #6f9db8;
  border-radius: 3px;
  background: #fff;
  color: #303840;
  font: inherit;
}

.filter::after {
  content: "";
  position: absolute;
  top: 9px;
  right: 5px;
  border: 3px solid transparent;
  border-top: 4px solid #333;
  border-bottom: 0;
  pointer-events: none;
}

.work { display: flex; flex: 1; min-height: 0; }

.rail {
  flex: none;
  width: 10px;
  padding-top: 188px;
  background: repeating-linear-gradient(135deg, #cbe0ea 0 2px, #d8e8f0 2px 4px);
}

.sash {
  display: flex;
  align-items: center;
  justify-content: center;
  width: 9px;
  height: 94px;
  margin: 0 0 9px 1px;
  border: 1px solid #acc9d9;
  border-right: 0;
  border-radius: 4px 0 0 4px;
}

.sash.strong {
  width: 8px;
  height: 92px;
  margin-left: 2px;
  border: 2px solid #8aa0ac;
  border-right: 0;
}

.sash::after { content: ""; width: 3px; height: 3px; border: 1px solid #24323c; }

.canvas {
  flex: 1;
  min-width: 0;
  background: linear-gradient(#c8dcec, #acc5de 28%, #809fc6 62%, #587aaa);
}

.canvas svg { display: block; width: 100%; height: 100%; }

.palette {
  display: flex;
  flex: none;
  align-items: flex-start;
  width: 69px;
  padding-top: 13px;
  background: #dceaf3;
}

.palette::before {
  content: "";
  position: absolute;
  width: 67px;
  height: 4px;
  margin-top: -9px;
  background: repeating-conic-gradient(#5686a5 0 25%, transparent 0 100%) 0 0 / 2px 2px;
}

.column { width: 41px; }
.column.second { width: 27px; }
.column.second .tool { width: 27px; }

.palette hr {
  height: 4px;
  margin: 5px 0;
  border: 0;
  background: repeating-conic-gradient(#5686a5 0 25%, transparent 0 100%) 0 0 / 2px 2px;
}

.pair { display: flex; align-items: center; }
.more { width: 13px; height: 28px; display: flex; align-items: center; justify-content: center; }
.more::after { content: ""; border: 3px solid transparent; border-left: 4px solid #333c43; border-right: 0; }

.frame { fill: none; stroke: #7d7d86; stroke-width: 1; }
.datum { fill: none; stroke: #9b6432; stroke-width: 1; }
.groove { fill: none; stroke: #384249; stroke-width: 2; }
.groove.faint { stroke: #616d75; stroke-width: 1; }
.shine { fill: none; stroke: #b9c5cd; stroke-width: 1; }
.shine.wide { stroke: #bccad4; stroke-width: 3; }
.slotDark { fill: none; stroke: #414b52; stroke-width: 1; stroke-linecap: round; }
.slotLight { fill: none; stroke: #c0d0dc; stroke-width: 4; stroke-linecap: round; }
.tag { fill: #93602f; font: 11px Lato, "Open Sans", sans-serif; }
.axisName { fill: #7c7b82; font-size: 10px; }
```
